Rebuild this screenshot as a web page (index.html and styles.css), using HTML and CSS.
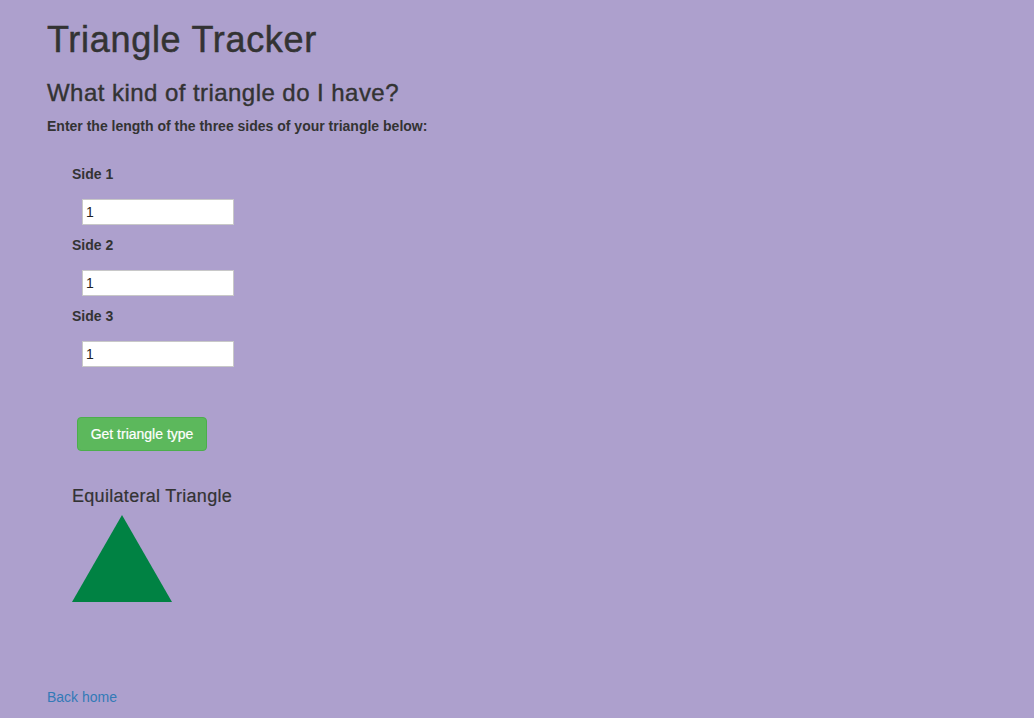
FILE: index.html
```html
<!DOCTYPE html>
<html>
<head>
<meta charset="utf-8">
<title>Triangle Tracker</title>
<link rel="stylesheet" href="styles.css">
</head>
<body>
<div class="container">
  <h1 class="title">Triangle Tracker</h1>
  <h3 class="subtitle">What kind of triangle do I have?</h3>
  <p class="intro">Enter the length of the three sides of your triangle below:</p>
  <form class="sides">
    <div class="field">
      <label for="side1">Side 1</label>
      <input id="side1" type="text" value="1">
    </div>
    <div class="field">
      <label for="side2">Side 2</label>
      <input id="side2" type="text" value="1">
    </div>
    <div class="field">
      <label for="side3">Side 3</label>
      <input id="side3" type="text" value="1">
    </div>
    <button type="button" class="btn">Get triangle type</button>
  </form>
  <div class="result">
    <h4 class="result-title">Equilateral Triangle</h4>
    <div class="triangle"></div>
  </div>
  <a class="back" href="#">Back home</a>
</div>
</body>
</html>
```

FILE: styles.css
```css
* { box-sizing: border-box; }
html, body { margin: 0; padding: 0; }
body {
  background: #ada0cd;
  color: #333333;
  font-family: "Liberation Sans", Arial, sans-serif;
  font-size: 14px;
  line-height: 20px;
  min-height: 718px;
}
.container {
  padding: 0 47px;
}
.title {
  font-size: 36px;
  font-weight: 500;
  line-height: 40px;
  letter-spacing: 0.7px;
  -webkit-text-stroke: 0.5px #333333;
  margin: 20px 0 0;
}
.subtitle {
  font-size: 24px;
  font-weight: 500;
  line-height: 26px;
  letter-spacing: 0.45px;
  -webkit-text-stroke: 0.4px #333333;
  margin: 20px 0 10px;
}
.intro {
  font-weight: bold;
  margin: 0;
}
.sides {
  display: flex;
  flex-direction: column;
  align-items: flex-start;
  padding-left: 25px;
  margin-top: 28px;
}
.field {
  display: flex;
  flex-direction: column;
  align-items: flex-start;
  margin-bottom: 10px;
}
.field label {
  font-weight: bold;
  line-height: 20px;
  margin-bottom: 15px;
}
.field input {
  margin-left: 10px;
  width: 152px;
  height: 26px;
  border: 1px solid #c8c8c8;
  background: #ffffff;
  padding: 0 3px;
  font-family: "Liberation Sans", Arial, sans-serif;
  font-size: 14px;
  color: #222222;
  outline: none;
}
.btn {
  margin-top: 40px;
  margin-left: 5px;
  height: 34px;
  width: 130px;
  padding: 0;
  background: #5cb85c;
  border: 1px solid #4cae4c;
  border-radius: 4px;
  color: #ffffff;
  font-family: "Liberation Sans", Arial, sans-serif;
  font-size: 14px;
  -webkit-text-stroke: 0.2px #ffffff;
}
.result {
  padding-left: 25px;
  margin-top: 34px;
}
.result-title {
  font-size: 18px;
  font-weight: 500;
  line-height: 22px;
  letter-spacing: 0.3px;
  -webkit-text-stroke: 0.2px #333333;
  margin: 0 0 8px;
}
.triangle {
  width: 0;
  height: 0;
  border-left: 50px solid transparent;
  border-right: 50px solid transparent;
  border-bottom: 87px solid #008243;
}
.back {
  display: inline-block;
  margin-top: 85px;
  color: #337ab7;
  text-decoration: none;
}
```
